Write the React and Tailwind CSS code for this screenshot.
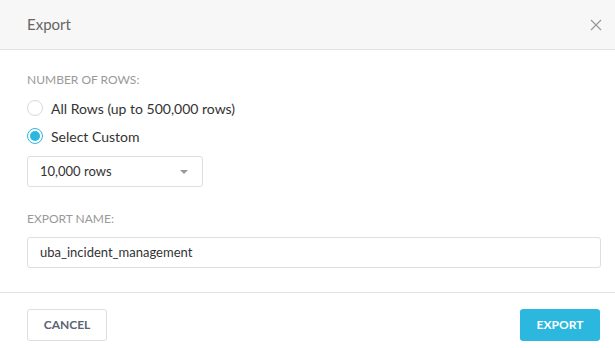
import React, { useState } from 'react';

function Radio({ checked, label, onClick }) {
  return (
    <label className="flex items-center h-[28px] cursor-pointer" onClick={onClick}>
      <span
        className={`w-[16px] h-[16px] rounded-full border flex items-center justify-center ${
          checked ? 'border-[#2cb8de]' : 'border-[#d9d9d9]'
        } bg-white`}
      >
        {checked && <span className="w-[10px] h-[10px] rounded-full bg-[#2cb8de]" />}
      </span>
      <span className="ml-[8px] text-[14px] text-[#333]">{label}</span>
    </label>
  );
}

export default function App() {
  const [mode, setMode] = useState('custom');

  return (
    <div className="w-[615px] h-[348px] bg-white flex flex-col font-['Lato','Liberation_Sans',sans-serif]">
      {/* Header */}
      <div className="h-[50px] shrink-0 flex items-center justify-between pl-[27px] pr-[12px] bg-[#f7f7f7] border-b border-[#e3e3e3]">
        <span className="text-[15px] text-[#666]">Export</span>
        <svg width="14" height="14" viewBox="0 0 14 14" className="text-[#999]">
          <path d="M2 2 L12 12 M12 2 L2 12" stroke="currentColor" strokeWidth="1.2" fill="none" />
        </svg>
      </div>

      {/* Body */}
      <div className="flex-1 pl-[27px] pr-[14px] pt-[23px] border-b border-[#e3e3e3]">
        <div className="text-[12px] leading-[14px] uppercase text-[#999]">Number of rows:</div>
        <div className="mt-[7px] flex flex-col">
          <Radio checked={mode === 'all'} label="All Rows (up to 500,000 rows)" onClick={() => setMode('all')} />
          <Radio checked={mode === 'custom'} label="Select Custom" onClick={() => setMode('custom')} />
        </div>
        <div className="mt-[6px] w-[176px] h-[31px] border border-[#dedede] rounded-[3px] flex items-center justify-between pl-[12px] pr-[14px]">
          <span className="text-[13px] text-[#333]">10,000 rows</span>
          <svg width="8" height="4" viewBox="0 0 8 4">
            <path d="M0 0 L8 0 L4 4 Z" fill="#999" />
          </svg>
        </div>

        <div className="mt-[25px] text-[12px] leading-[14px] uppercase text-[#999]">Export name:</div>
        <div className="mt-[11px] h-[31px] border border-[#dedede] rounded-[3px] flex items-center pl-[12px]">
          <span className="text-[13px] text-[#333]">uba_incident_management</span>
        </div>
      </div>

      {/* Footer */}
      <div className="h-[55px] shrink-0 flex items-start justify-between pl-[27px] pr-[15px] pt-[16px]">
        <button className="w-[80px] h-[32px] border border-[#dedede] rounded-[3px] bg-white text-[12px] font-bold text-[#5a6473]">
          CANCEL
        </button>
        <button className="w-[80px] h-[32px] rounded-[3px] bg-[#2cb8de] text-[12px] font-bold text-white">
          EXPORT
        </button>
      </div>
    </div>
  );
}
